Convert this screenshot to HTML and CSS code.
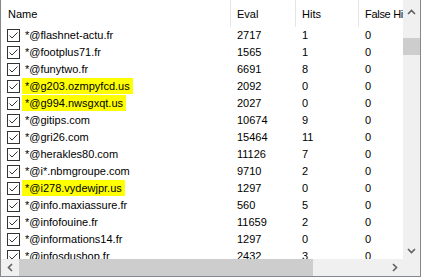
FILE: index.html
```html
<!DOCTYPE html>
<html lang="en">
<head>
  <meta charset="UTF-8">
  <title>Filtres</title>
  <link rel="stylesheet" href="styles.css">
</head>
<body>
  <div class="listview">
    <div class="viewport">
      <div class="row header">
        <div class="hcell name-head">Name</div>
        <div class="hcell">Eval</div>
        <div class="hcell">Hits</div>
        <div class="hcell false-head">False Hits</div>
      </div>

      <div class="row">
        <div class="name"><svg class="check" width="13" height="13" viewBox="0 0 13 13"><rect x="0.5" y="0.5" width="12" height="12"/><polyline points="2.5,6.5 5,9 10.5,3.5"/></svg><span class="label">*@flashnet-actu.fr</span></div>
        <div class="num">2717</div><div class="num">1</div><div class="num">0</div>
      </div>
      <div class="row">
        <div class="name"><svg class="check" width="13" height="13" viewBox="0 0 13 13"><rect x="0.5" y="0.5" width="12" height="12"/><polyline points="2.5,6.5 5,9 10.5,3.5"/></svg><span class="label">*@footplus71.fr</span></div>
        <div class="num">1565</div><div class="num">1</div><div class="num">0</div>
      </div>
      <div class="row">
        <div class="name"><svg class="check" width="13" height="13" viewBox="0 0 13 13"><rect x="0.5" y="0.5" width="12" height="12"/><polyline points="2.5,6.5 5,9 10.5,3.5"/></svg><span class="label">*@funytwo.fr</span></div>
        <div class="num">6691</div><div class="num">8</div><div class="num">0</div>
      </div>
      <div class="row">
        <div class="name"><svg class="check" width="13" height="13" viewBox="0 0 13 13"><rect x="0.5" y="0.5" width="12" height="12"/><polyline points="2.5,6.5 5,9 10.5,3.5"/></svg><span class="label marked">*@g203.ozmpyfcd.us</span></div>
        <div class="num">2092</div><div class="num">0</div><div class="num">0</div>
      </div>
      <div class="row">
        <div class="name"><svg class="check" width="13" height="13" viewBox="0 0 13 13"><rect x="0.5" y="0.5" width="12" height="12"/><polyline points="2.5,6.5 5,9 10.5,3.5"/></svg><span class="label marked">*@g994.nwsgxqt.us</span></div>
        <div class="num">2027</div><div class="num">0</div><div class="num">0</div>
      </div>
      <div class="row">
        <div class="name"><svg class="check" width="13" height="13" viewBox="0 0 13 13"><rect x="0.5" y="0.5" width="12" height="12"/><polyline points="2.5,6.5 5,9 10.5,3.5"/></svg><span class="label">*@gitips.com</span></div>
        <div class="num">10674</div><div class="num">9</div><div class="num">0</div>
      </div>
      <div class="row">
        <div class="name"><svg class="check" width="13" height="13" viewBox="0 0 13 13"><rect x="0.5" y="0.5" width="12" height="12"/><polyline points="2.5,6.5 5,9 10.5,3.5"/></svg><span class="label">*@gri26.com</span></div>
        <div class="num">15464</div><div class="num">11</div><div class="num">0</div>
      </div>
      <div class="row">
        <div class="name"><svg class="check" width="13" height="13" viewBox="0 0 13 13"><rect x="0.5" y="0.5" width="12" height="12"/><polyline points="2.5,6.5 5,9 10.5,3.5"/></svg><span class="label">*@herakles80.com</span></div>
        <div class="num">11126</div><div class="num">7</div><div class="num">0</div>
      </div>
      <div class="row">
        <div class="name"><svg class="check" width="13" height="13" viewBox="0 0 13 13"><rect x="0.5" y="0.5" width="12" height="12"/><polyline points="2.5,6.5 5,9 10.5,3.5"/></svg><span class="label">*@i*.nbmgroupe.com</span></div>
        <div class="num">9710</div><div class="num">2</div><div class="num">0</div>
      </div>
      <div class="row">
        <div class="name"><svg class="check" width="13" height="13" viewBox="0 0 13 13"><rect x="0.5" y="0.5" width="12" height="12"/><polyline points="2.5,6.5 5,9 10.5,3.5"/></svg><span class="label marked">*@i278.vydewjpr.us</span></div>
        <div class="num">1297</div><div class="num">0</div><div class="num">0</div>
      </div>
      <div class="row">
        <div class="name"><svg class="check" width="13" height="13" viewBox="0 0 13 13"><rect x="0.5" y="0.5" width="12" height="12"/><polyline points="2.5,6.5 5,9 10.5,3.5"/></svg><span class="label">*@info.maxiassure.fr</span></div>
        <div class="num">560</div><div class="num">5</div><div class="num">0</div>
      </div>
      <div class="row">
        <div class="name"><svg class="check" width="13" height="13" viewBox="0 0 13 13"><rect x="0.5" y="0.5" width="12" height="12"/><polyline points="2.5,6.5 5,9 10.5,3.5"/></svg><span class="label">*@infofouine.fr</span></div>
        <div class="num">11659</div><div class="num">2</div><div class="num">0</div>
      </div>
      <div class="row">
        <div class="name"><svg class="check" width="13" height="13" viewBox="0 0 13 13"><rect x="0.5" y="0.5" width="12" height="12"/><polyline points="2.5,6.5 5,9 10.5,3.5"/></svg><span class="label">*@informations14.fr</span></div>
        <div class="num">1297</div><div class="num">0</div><div class="num">0</div>
      </div>
      <div class="row">
        <div class="name"><svg class="check" width="13" height="13" viewBox="0 0 13 13"><rect x="0.5" y="0.5" width="12" height="12"/><polyline points="2.5,6.5 5,9 10.5,3.5"/></svg><span class="label">*@infosdushop.fr</span></div>
        <div class="num">2432</div><div class="num">3</div><div class="num">0</div>
      </div>
    </div>

    <!-- barre verticale -->
    <div class="vscroll">
      <div class="arrow up"><svg width="9" height="6" viewBox="0 0 9 6"><polyline points="1,5 4.5,1.5 8,5"/></svg></div>
      <div class="vthumb"></div>
      <div class="track"></div>
      <div class="arrow down"><svg width="9" height="6" viewBox="0 0 9 6"><polyline points="1,1 4.5,4.5 8,1"/></svg></div>
    </div>

    <!-- barre horizontale -->
    <div class="hscroll">
      <div class="arrow left"><svg width="6" height="9" viewBox="0 0 6 9"><polyline points="5,1 1.5,4.5 5,8"/></svg></div>
      <div class="hthumb"></div>
      <div class="track"></div>
      <div class="arrow right"><svg width="6" height="9" viewBox="0 0 6 9"><polyline points="1,1 4.5,4.5 1,8"/></svg></div>
    </div>
    <div class="corner"></div>
  </div>
</body>
</html>
```

FILE: styles.css
```css
body {
  margin: 0;
  background-color: #ffffff;
  font-family: "Liberation Sans", Arial, sans-serif;
  font-size: 11px;
  color: #000000;
}

.listview {
  display: grid;
  grid-template-columns: 402px 17px;
  grid-template-rows: 259px 17px;
  width: 419px;
  border: 1px solid #828790;
  border-top: none;
}

.viewport {
  overflow: hidden;
  background-color: #ffffff;
}

.row {
  display: grid;
  grid-template-columns: 230px 65px 63px 144px;
  height: 17px;
  white-space: nowrap;
}

/* en-tete des colonnes */
.header {
  height: 27px;
}

.hcell {
  height: 27px;
  box-sizing: border-box;
  padding-top: 2px;
  padding-left: 6px;
  line-height: 25px;
  border-right: 1px solid #e5e5e5;
}

.name-head {
  padding-left: 7px;
}

.false-head {
  letter-spacing: -0.3px;
}

.name {
  display: flex;
  align-items: flex-start;
  padding-left: 6px;
}

.check {
  margin-top: 2px;
  flex-shrink: 0;
}

.check rect {
  fill: #ffffff;
  stroke: #333333;
}

.check polyline {
  fill: none;
  stroke: #333333;
  stroke-width: 1;
}

.label {
  margin-left: 2px;
  padding: 0 3px;
  height: 16px;
  line-height: 16px;
}

.marked {
  background-color: #ffff00;
}

.num {
  padding-left: 6px;
  line-height: 16px;
}

/* barres de defilement */
.vscroll, .hscroll {
  display: flex;
  background-color: #f0f0f0;
}

.vscroll {
  flex-direction: column;
}

.track {
  flex: 1;
}

.arrow {
  display: flex;
  align-items: center;
  justify-content: center;
  flex-shrink: 0;
}

.arrow polyline {
  fill: none;
  stroke: #606060;
  stroke-width: 1.6;
}

.vscroll .arrow {
  height: 17px;
}

.vscroll .up {
  height: 21px;
  padding-top: 2px;
  box-sizing: border-box;
}

.hscroll .arrow {
  width: 17px;
}

.vthumb {
  height: 17px;
  margin-top: 17px;
  background-color: #cdcdcd;
}

.hthumb {
  width: 294px;
  margin-left: 1px;
  background-color: #cdcdcd;
}

.corner {
  background-color: #f0f0f0;
}
```
